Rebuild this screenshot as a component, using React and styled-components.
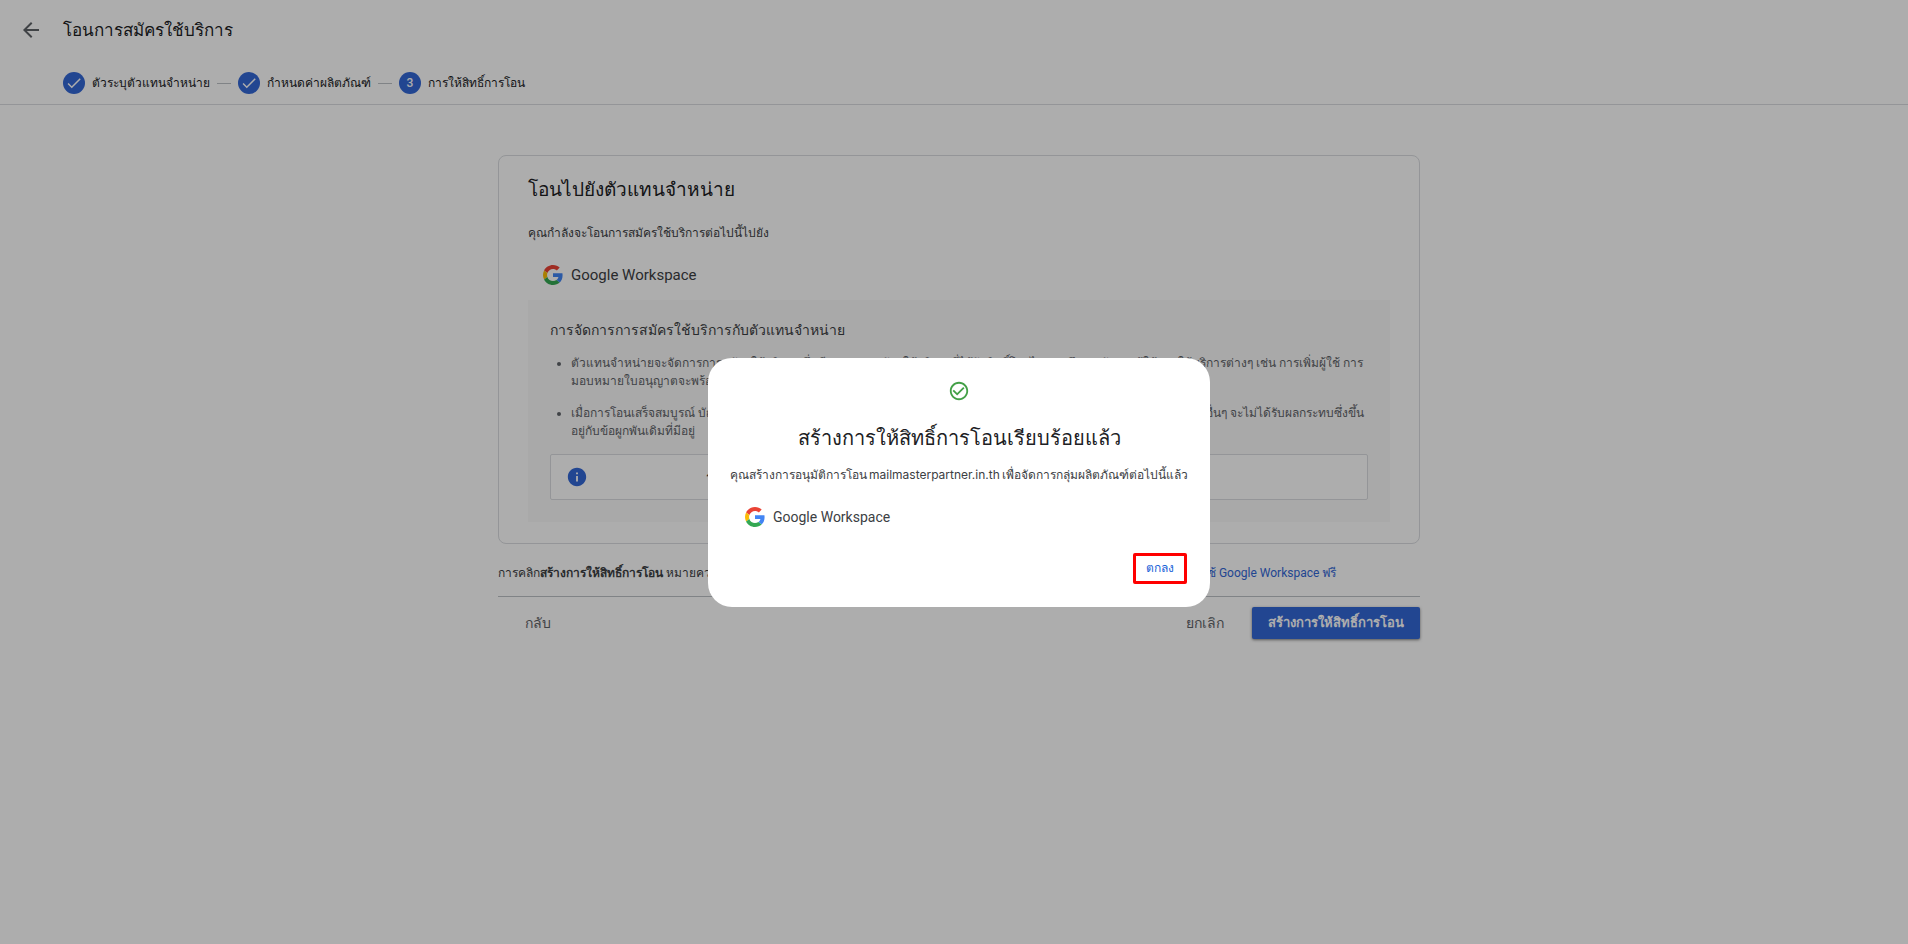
import React from "react";
import styled, { createGlobalStyle } from "styled-components";

const GlobalStyle = createGlobalStyle`
  * {
    box-sizing: border-box;
  }
  body {
    margin: 0;
    background: #fff;
    color: #3c4043;
    font-family: Roboto, sans-serif;
    font-size: 12px;
    line-height: 18px;
  }
  h1, h2, h3, p, ul, ol {
    margin: 0;
    padding: 0;
    font-weight: 400;
  }
  button {
    border: 0;
    padding: 0;
    background: none;
    font-family: inherit;
    cursor: pointer;
  }
  svg {
    display: block;
    flex: none;
  }
`;

const Page = styled.div`
  min-height: 100vh;
`;

const Header = styled.header`
  border-bottom: 1px solid #dadce0;
`;

const TitleBar = styled.div`
  display: flex;
  align-items: center;
  gap: 20px;
  height: 60px;
  padding-left: 19px;
`;

const PageTitle = styled.h1`
  font-size: 17px;
  line-height: 28px;
  color: #202124;
`;

const Steps = styled.ol`
  display: flex;
  align-items: center;
  height: 44px;
  padding: 2px 0 0 63px;
  list-style: none;
`;

const Step = styled.li`
  display: flex;
  align-items: center;
  gap: 7px;
  color: #202124;
  & + &::before {
    content: "";
    width: 14px;
    margin-left: 7px;
    border-top: 1px solid #bdc1c6;
  }
`;

const StepMark = styled.span`
  display: flex;
  align-items: center;
  justify-content: center;
  width: 22px;
  height: 22px;
  border-radius: 50%;
  background: #3367d6;
  color: #fff;
  font-weight: 500;
`;

const Main = styled.main`
  padding: 50px 24px 40px 34px;
`;

const Content = styled.div`
  max-width: 922px;
  margin: 0 auto;
`;

const Card = styled.section`
  padding: 20px 29px 21px;
  border: 1px solid #dadce0;
  border-radius: 8px;
`;

const CardTitle = styled.h2`
  font-size: 19px;
  line-height: 28px;
  color: #202124;
`;

const Lead = styled.p`
  margin-top: 20px;
`;

const Product = styled.div`
  display: flex;
  align-items: center;
  gap: 8px;
  height: 20px;
  margin-top: 23px;
  padding-left: 15px;
  font-size: ${({ $size }) => $size};
  line-height: 20px;
`;

const Panel = styled.div`
  margin-top: 15px;
  padding: 20px 22px 22px;
  background: #fafafa;
`;

const PanelTitle = styled.h3`
  font-size: 14px;
  line-height: 20px;
`;

const Notes = styled.ul`
  padding-left: 21px;
  color: #5f6368;
`;

const Note = styled.li`
  margin-top: 14px;
  white-space: nowrap;
`;

const InfoBox = styled.div`
  display: flex;
  align-items: center;
  gap: 118px;
  height: 46px;
  margin-top: 14px;
  padding: 0 15px;
  border: 1px solid #dadce0;
  border-radius: 2px;
  background: #fff;
`;

const Consent = styled.p`
  margin-top: 20px;
  white-space: nowrap;
`;

const TermsLink = styled.a`
  color: #3367d6;
  text-decoration: none;
`;

const Actions = styled.div`
  display: flex;
  align-items: center;
  height: 52px;
  margin-top: 14px;
  padding-left: 27px;
  border-top: 1px solid #bdc1c6;
`;

const PlainButton = styled.button`
  color: #5f6368;
  font-size: 14px;
  line-height: 20px;
`;

const CancelButton = styled(PlainButton)`
  margin-left: auto;
`;

const PrimaryButton = styled.button`
  height: 32px;
  margin-left: 28px;
  padding: 0 16px;
  border-radius: 2px;
  background: #3367d6;
  box-shadow: 0 1px 3px rgba(0, 0, 0, 0.5);
  color: #fff;
  font-size: 13px;
  font-weight: 700;
`;

const Overlay = styled.div`
  position: fixed;
  inset: 0;
  display: flex;
  align-items: center;
  justify-content: center;
  padding: 21px 0 0 10px;
  background: rgba(0, 0, 0, 0.32);
`;

const Dialog = styled.div`
  width: 502px;
  padding: 22px 22px 23px;
  border-radius: 24px;
  background: #fff;
`;

const DialogHead = styled.div`
  display: flex;
  flex-direction: column;
  align-items: center;
  gap: 22px;
`;

const DialogTitle = styled.h2`
  font-size: 20px;
  line-height: 28px;
  color: #202124;
`;

const DialogText = styled.p`
  display: flex;
  align-items: center;
  gap: 2px;
  margin-top: 14px;
  white-space: nowrap;
`;

const Domain = styled.span`
  font-family: Inter, sans-serif;
`;

const DialogActions = styled.div`
  display: flex;
  justify-content: flex-end;
  margin-top: 26px;
  padding-right: 1px;
`;

const OkButton = styled.button`
  width: 54px;
  height: 31px;
  padding-bottom: 2px;
  border: 3px solid #f00;
  border-radius: 2px;
  color: #1a62d8;
  font-size: 12px;
  font-weight: 500;
`;

const BackIcon = () => (
  <svg width="24" height="24" viewBox="0 0 24 24" fill="#5f6368">
    <path d="M20 11H7.83l5.59-5.59L12 4l-8 8 8 8 1.41-1.41L7.83 13H20v-2z" />
  </svg>
);

const TickIcon = () => (
  <svg width="18" height="18" viewBox="0 0 24 24" fill="#fff">
    <path d="M9 16.17L4.83 12l-1.42 1.41L9 19 21 7l-1.41-1.41z" />
  </svg>
);

const InfoIcon = () => (
  <svg width="22" height="22" viewBox="0 0 24 24" fill="#3367d6">
    <path d="M12 2C6.48 2 2 6.48 2 12s4.48 10 10 10 10-4.48 10-10S17.52 2 12 2zm1 15h-2v-6h2v6zm0-8h-2V7h2v2z" />
  </svg>
);

const SuccessIcon = () => (
  <svg width="22" height="22" viewBox="0 0 24 24" fill="#43a047">
    <path d="M16.59 7.58L10 14.17l-3.59-3.58L5 12l5 5 8-8zM12 2C6.48 2 2 6.48 2 12s4.48 10 10 10 10-4.48 10-10S17.52 2 12 2zm0 18c-4.42 0-8-3.58-8-8s3.58-8 8-8 8 3.58 8 8-3.58 8-8 8z" />
  </svg>
);

const GoogleIcon = () => (
  <svg width="20" height="20" viewBox="0 0 48 48">
    <path fill="#ea4335" d="M24 9.5c3.54 0 6.71 1.22 9.21 3.6l6.85-6.85C35.9 2.38 30.47 0 24 0 14.62 0 6.51 5.38 2.56 13.22l7.98 6.19C12.43 13.72 17.74 9.5 24 9.5z" />
    <path fill="#4285f4" d="M46.98 24.55c0-1.57-.15-3.09-.38-4.55H24v9.02h12.94c-.58 2.96-2.26 5.48-4.78 7.18l7.73 6c4.51-4.18 7.09-10.36 7.09-17.65z" />
    <path fill="#fbbc05" d="M10.53 28.59c-.48-1.45-.76-2.99-.76-4.59s.27-3.14.76-4.59l-7.98-6.19C.92 16.46 0 20.12 0 24c0 3.88.92 7.54 2.56 10.78l7.97-6.19z" />
    <path fill="#34a853" d="M24 48c6.48 0 11.93-2.13 15.89-5.81l-7.73-6c-2.15 1.45-4.92 2.3-8.16 2.3-6.26 0-11.57-4.22-13.47-9.91l-7.98 6.19C6.51 42.62 14.62 48 24 48z" />
  </svg>
);

const App = () => (
  <Page>
    <GlobalStyle />
    <Header>
      <TitleBar>
        <button type="button" aria-label="กลับ">
          <BackIcon />
        </button>
        <PageTitle>โอนการสมัครใช้บริการ</PageTitle>
      </TitleBar>
      <Steps>
        <Step>
          <StepMark>
            <TickIcon />
          </StepMark>
          ตัวระบุตัวแทนจำหน่าย
        </Step>
        <Step>
          <StepMark>
            <TickIcon />
          </StepMark>
          กำหนดค่าผลิตภัณฑ์
        </Step>
        <Step>
          <StepMark>3</StepMark>
          การให้สิทธิ์การโอน
        </Step>
      </Steps>
    </Header>
    <Main>
      <Content>
        <Card>
          <CardTitle>โอนไปยังตัวแทนจำหน่าย</CardTitle>
          <Lead>คุณกำลังจะโอนการสมัครใช้บริการต่อไปนี้ไปยัง</Lead>
          <Product $size="15px">
            <GoogleIcon />
            Google Workspace
          </Product>
          <Panel>
            <PanelTitle>การจัดการการสมัครใช้บริการกับตัวแทนจำหน่าย</PanelTitle>
            <Notes>
              <Note>
                ตัวแทนจำหน่ายจะจัดการการสมัครใช้บริการ ซึ่งเรียกว่าการสมัครใช้บริการที่ได้รับสิทธิ์โอนไป
                รวมถึงการจัดการผู้ใช้และให้บริการต่างๆ เช่น การเพิ่มผู้ใช้ การ
                <br />
                มอบหมายใบอนุญาตจะพร้อมใช้งาน
              </Note>
              <Note>
                เมื่อการโอนเสร็จสมบูรณ์ บัญชีของคุณจะได้รับการจัดการโดยตัวแทนจำหน่าย
                และการสมัครใช้บริการที่มีอยู่ รวมไปถึงรายการอื่นๆ จะไม่ได้รับผลกระทบซึ่งขึ้น
                <br />
                อยู่กับข้อผูกพันเดิมที่มีอยู่
              </Note>
            </Notes>
            <InfoBox>
              <InfoIcon />
              รายการนี้จะมีผลหลังจากการโอนเสร็จสมบูรณ์
            </InfoBox>
          </Panel>
        </Card>
        <Consent>
          การคลิก<b>สร้างการให้สิทธิ์การโอน</b> หมายความว่าคุณยอมรับ ข้อกำหนดในการให้บริการของตัวแทนจำหน่ายรายใหม่นี้ และ{" "}
          <TermsLink href="#terms">ข้อตกลงการเลือกใช้ Google Workspace ฟรี</TermsLink>
        </Consent>
        <Actions>
          <PlainButton type="button">กลับ</PlainButton>
          <CancelButton type="button">ยกเลิก</CancelButton>
          <PrimaryButton type="button">สร้างการให้สิทธิ์การโอน</PrimaryButton>
        </Actions>
      </Content>
    </Main>
    <Overlay>
      <Dialog role="dialog" aria-modal="true" aria-labelledby="dialog-title">
        <DialogHead>
          <SuccessIcon />
          <DialogTitle id="dialog-title">สร้างการให้สิทธิ์การโอนเรียบร้อยแล้ว</DialogTitle>
        </DialogHead>
        <DialogText>
          คุณสร้างการอนุมัติการโอน
          <Domain>mailmasterpartner.in.th</Domain>
          เพื่อจัดการกลุ่มผลิตภัณฑ์ต่อไปนี้แล้ว
        </DialogText>
        <Product $size="14px">
          <GoogleIcon />
          Google Workspace
        </Product>
        <DialogActions>
          <OkButton type="button">ตกลง</OkButton>
        </DialogActions>
      </Dialog>
    </Overlay>
  </Page>
);

export default App;
